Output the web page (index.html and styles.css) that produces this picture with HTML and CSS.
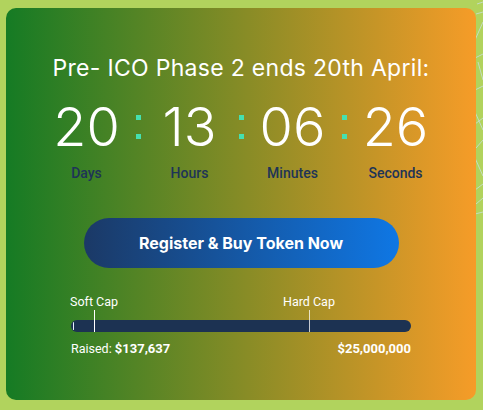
FILE: index.html
```html
<!DOCTYPE html>
<html lang="en">
<head>
<meta charset="utf-8">
<title>ICO Countdown</title>
<link rel="stylesheet" href="styles.css">
</head>
<body>
<svg class="deco" width="8" height="230" viewBox="0 0 8 230" aria-hidden="true">
  <g fill="none" stroke="#c9e0d8" stroke-width="1" opacity="0.8">
    <path d="M2 4 L8 2 M1 14 L8 12 M0 40 L8 22 M0 58 L8 54 M3 62 L8 80 M0 90 L8 86 M0 112 L8 130 M0 124 L8 118 M1 148 L8 140 M0 158 L8 176 M0 190 L8 184 M1 204 L8 198 M0 214 L8 212"/>
  </g>
</svg>
<div class="page">
  <section class="card">
    <h2 class="title">Pre- ICO Phase 2 ends 20th April:</h2>
    <div class="countdown">
      <div class="unit"><div class="num">20</div><div class="lbl">Days</div></div>
      <div class="colon"><span></span><span></span></div>
      <div class="unit"><div class="num">13</div><div class="lbl">Hours</div></div>
      <div class="colon"><span></span><span></span></div>
      <div class="unit"><div class="num">06</div><div class="lbl">Minutes</div></div>
      <div class="colon"><span></span><span></span></div>
      <div class="unit"><div class="num">26</div><div class="lbl">Seconds</div></div>
    </div>
    <a class="btn" href="#">Register &amp; Buy Token Now</a>
    <div class="progress">
      <div class="caps">
        <span class="cap cap-soft">Soft Cap</span>
        <span class="cap cap-hard">Hard Cap</span>
      </div>
      <div class="bar">
        <div class="fill"></div>
        <i class="mark mark-soft"></i>
        <i class="mark mark-hard"></i>
      </div>
      <div class="totals">
        <span>Raised: <b>$137,637</b></span>
        <b>$25,000,000</b>
      </div>
    </div>
  </section>
</div>
</body>
</html>
```

FILE: styles.css
```css
html, body {
  margin: 0;
  padding: 0;
}
body {
  position: relative;
  background: #b1d35d;
  font-family: "Roboto", "Liberation Sans", sans-serif;
  color: #fff;
}
.deco {
  position: absolute;
  top: 0;
  right: 0;
}
.page {
  position: relative;
  padding: 8px 7px 10px 6px;
}
.card {
  height: 392px;
  box-sizing: border-box;
  border-radius: 10px;
  background: linear-gradient(90deg, #157b24 0%, #f69c28 100%);
  padding-top: 46px;
  display: flex;
  flex-direction: column;
  align-items: center;
}
.title {
  margin: 0;
  font-family: "Inter", "Roboto", sans-serif;
  font-size: 23px;
  line-height: 28px;
  letter-spacing: 0.3px;
  font-weight: 400;
  color: #fff;
  text-align: center;
}
.countdown {
  margin-top: 17px;
  display: grid;
  grid-template-columns: 98px 5px 98px 5px 98px 5px 98px;
}
.unit {
  text-align: center;
}
.num {
  font-family: "Inter", "Roboto", sans-serif;
  font-size: 54px;
  line-height: 56px;
  font-weight: 300;
  color: #fff;
}
.lbl {
  margin-top: 9px;
  font-size: 14px;
  line-height: 18px;
  font-weight: 500;
  color: #1e3457;
}
.colon {
  margin-top: 16px;
  height: 24px;
  display: flex;
  flex-direction: column;
  justify-content: space-between;
}
.colon span {
  width: 5px;
  height: 5px;
  background: #45e0b0;
}
.btn {
  margin-top: 36px;
  width: 315px;
  height: 50px;
  border-radius: 25px;
  background: linear-gradient(90deg, #1b3966 0%, #0f77e4 100%);
  color: #fff;
  text-decoration: none;
  font-family: "Inter", "Roboto", sans-serif;
  font-size: 16px;
  font-weight: 700;
  display: flex;
  align-items: center;
  justify-content: center;
}
.progress {
  margin-top: 27px;
  width: 340px;
}
.caps {
  position: relative;
  height: 15px;
  font-size: 12.5px;
  line-height: 14px;
}
.cap {
  position: absolute;
  top: 0;
}
.cap-soft { left: -1px; }
.cap-hard { left: 212px; }
.bar {
  position: relative;
  margin-top: 10px;
  height: 12px;
  border-radius: 6px;
  background: #1c3252;
}
.fill {
  position: absolute;
  left: 2px;
  top: 2px;
  width: 1px;
  height: 8px;
  background: #e8f0ff;
  border-radius: 1px;
}
.mark {
  position: absolute;
  bottom: 0;
  width: 1px;
  height: 22px;
}
.mark-soft { left: 23px; background: #ffffff; }
.mark-hard { left: 238px; background: rgba(255,255,255,0.75); }
.totals {
  margin-top: 9px;
  display: flex;
  justify-content: space-between;
  font-size: 12.5px;
  line-height: 16px;
  color: #fff;
}
.totals b {
  font-weight: 700;
  font-size: 13px;
}
```
